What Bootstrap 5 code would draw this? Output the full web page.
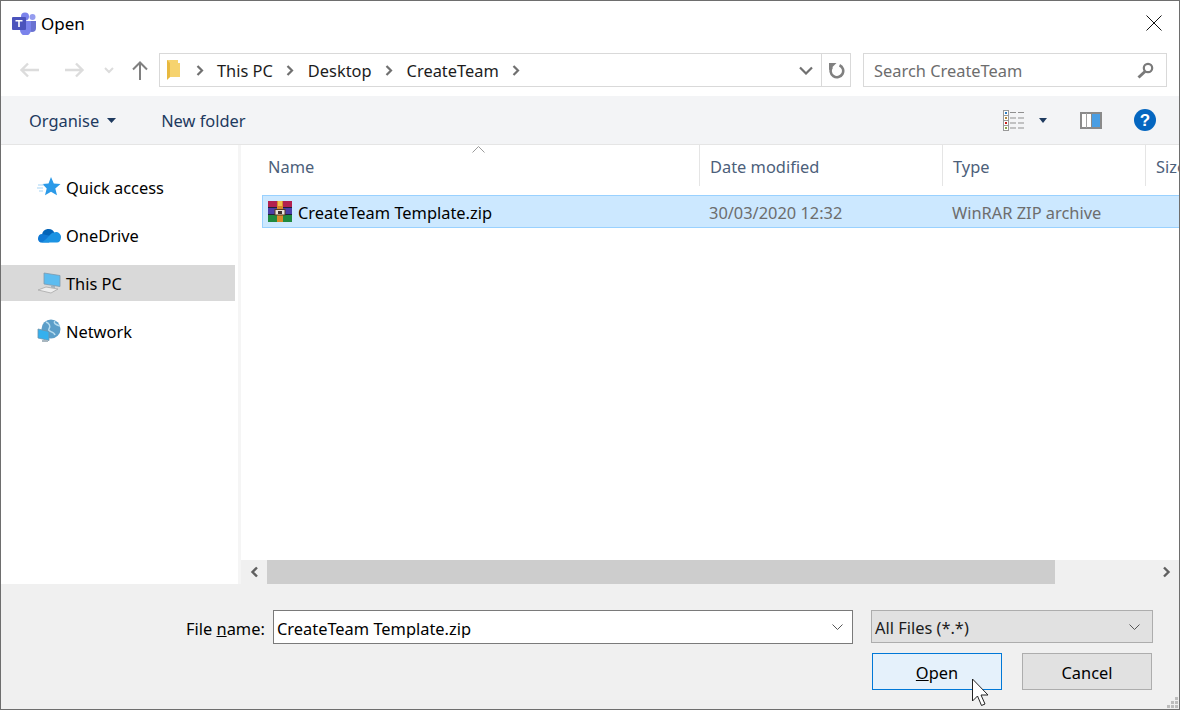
<!DOCTYPE html>
<html lang="en">
<head>
<meta charset="UTF-8">
<title>Open</title>
<link rel="stylesheet" href="https://cdn.jsdelivr.net/npm/bootstrap@5.3.3/dist/css/bootstrap.min.css">
<style>
    html, body { height: 100%; margin: 0; }
    body { font-family: "Noto Sans", "Open Sans", sans-serif; font-size: 16.4px; color: #000; background: #fff; overflow: hidden; line-height: 1.2; }
    svg { display: block; flex: none; }
    .dlg { width: 1180px; height: 710px; border: 1px solid #6e6e6e; position: relative; overflow: hidden; }
    .title-row { height: 47px; padding-left: 11px; }
    .title-row svg { margin-bottom: 3px; }
    .title-row span { margin-left: 5px; margin-bottom: 1px; font-size: 17px; }
    .title-row .close-x { margin-left: auto; margin-right: 17px; margin-bottom: 4px; }
    .nav-row { height: 48px; padding-bottom: 4px; }
    .nav-arrows { width: 158px; padding-left: 18px; }
    .gap-fwd { margin-left: 26px; }
    .gap-down { margin-left: 19px; }
    .gap-up { margin-left: 18px; }
    .addr { width: 692px; height: 34px; border: 1px solid #d9d9d9; color: #1c1c1c; }
    .addr-path { padding-left: 6px; }
    .addr-path .crumb { margin: 0 13px; padding-top: 2px; }
    .addr-path .crumb-wide { margin-left: 14px; }
    .addr-folder { margin-right: 15px; }
    .refresh { width: 29px; height: 100%; border-left: 1px solid #d9d9d9; }
    .search { width: 304px; height: 34px; margin-left: 12px; border: 1px solid #d9d9d9; color: #6d6d6d; padding: 2px 12px 0 10px; }
    .search svg { margin-top: -2px; }
    .tool-row { height: 49px; background: #f3f4f6; border-bottom: 1px solid #e5e5e5; color: #1e3a5f; padding-left: 28px; padding-right: 23px; }
    .tool-row span { padding-top: 1px; }
    .tool-caret { margin-left: 8px; }
    .new-folder { margin-left: 45px; }
    .gap-caret { margin-left: 14px; }
    .gap-pane { margin-left: 33px; }
    .gap-help { margin-left: 32px; }
    .main { height: 439px; }
    .side { flex: none; width: 240px; border-right: 3px solid #f5f5f5; padding-top: 24px; }
    .side-item { height: 36px; margin-bottom: 12px; padding-left: 36px; width: 234px; }
    .side-item svg { margin-right: 5px; }
    .side-item span { padding-top: 2px; }
    .side-item.is-on { background: #d9d9d9; }
    .files { min-width: 0; }
    .file-body { position: relative; overflow: hidden; }
    .col-head { height: 41px; color: #4c607a; }
    .col-head > div { flex: none; height: 100%; padding-left: 10px; padding-top: 3px; border-right: 1px solid #e5e5e5; display: flex; align-items: center; }
    .c-name { width: 459px; padding-left: 27px !important; position: relative; }
    .c-date { width: 243px; }
    .c-type { width: 203px; }
    .sort-up { position: absolute; left: 231px; top: 1px; }
    .file-row { height: 33px; margin-top: 9px; margin-left: 21px; background: #cce8ff; border: 1px solid #99d1ff; border-right: 0; }
    .file-row span, .f-date, .f-type { padding-top: 3px; }
    .f-name { flex: none; width: 446px; padding-left: 5px; }
    .f-name svg { margin-right: 6px; }
    .f-date { flex: none; width: 243px; color: #6d6d6d; }
    .f-type { color: #6d6d6d; }
    .h-scroll { height: 24px; background: #f0f0f0; margin-top: auto; }
    .h-btn { flex: none; width: 26px; }
    .h-thumb { flex: none; width: 788px; background: #cdcdcd; }
    .h-track { flex-grow: 1; }
    .foot { height: 125px; background: #f0f0f0; padding-top: 26px; }
    .name-line { padding-left: 185px; }
    .name-lbl { width: 87px; padding-top: 9px; }
    .name-box { width: 580px; height: 34px; background: #fff; border: 1px solid #7a7a7a; padding: 0 9px 0 3px; }
    .name-box input { border: 0; outline: 0; padding: 3px 0 0; background: transparent; font: inherit; color: #000; width: 100%; }
    .type-box { width: 282px; height: 33px; margin-left: 18px; background: #e1e1e1; border: 1px solid #adadad; padding: 0 12px 0 3px; color: #1c1c1c; }
    .type-box span { padding-top: 3px; }
    .btn-line { margin-top: 9px; padding-left: 871px; }
    .win-btn { width: 130px; height: 37px; border-radius: 0; background: #e1e1e1; border: 1px solid #adadad; color: #000; padding: 3px 0 0; font-size: 16.4px; line-height: 1.2; }
    .win-btn.is-default { background: #e5f1fb; border-color: #0078d7; margin-right: 20px; }
    .mouse { position: absolute; left: 970px; top: 677px; }
    .grip { position: absolute; right: 1px; bottom: 1px; }
</style>
</head>
<body>
<div class="dlg d-flex flex-column">

    <div class="title-row d-flex align-items-center">
        <svg width="24" height="23" viewBox="0 0 24 23"><circle cx="20.5" cy="5" r="3" fill="#7b83eb" opacity=".8"/><path d="M16 9h8v7a4 4 0 0 1-8 0z" fill="#5059c9" opacity=".85"/><circle cx="13" cy="4.5" r="4" fill="#7b83eb"/><path d="M8 9h11v9a5.500 5.500 0 0 1-11 0z" fill="#7b83eb"/><rect x="0" y="5" width="14" height="13" rx="1" fill="#4b53bc"/><path d="M3.500 8h7v1.500H7.800V15H6.200V9.500H3.500z" fill="#fff"/></svg>
        <span>Open</span>
        <svg class="close-x" width="16" height="16" viewBox="0 0 16 16"><path d="M.5.500l15 15M15.500.500l-15 15" stroke="#111" stroke-width="1"/></svg>
    </div>

    <div class="nav-row d-flex align-items-center">
        <div class="nav-arrows d-flex align-items-center">
            <svg width="20" height="16" viewBox="0 0 20 16"><path d="M9 1.500L2.500 8 9 14.500M2.500 8H20" fill="none" stroke="#dcdcdc" stroke-width="2.400"/></svg>
            <svg class="gap-fwd" width="20" height="16" viewBox="0 0 20 16"><path d="M11 1.500L17.500 8 11 14.500M17.500 8H0" fill="none" stroke="#dcdcdc" stroke-width="2.400"/></svg>
            <svg class="gap-down" width="10" height="7" viewBox="0 0 10 7"><path d="M1 1l4 4 4-4" fill="none" stroke="#dcdcdc" stroke-width="2"/></svg>
            <svg class="gap-up" width="16" height="19" viewBox="0 0 16 19"><path d="M1 8.500L8 1.500l7 7M8 1.500V19" fill="none" stroke="#808080" stroke-width="2"/></svg>
        </div>
        <div class="addr d-flex align-items-center">
            <div class="addr-path d-flex align-items-center flex-grow-1">
                <svg class="addr-folder" width="15" height="21" viewBox="0 0 15 21"><path d="M1 0h11v3h2v14H4l-3 2z" fill="#f6d36f"/><path d="M1 0l3 3v14l-3 3z" fill="#e8b93f"/></svg>
                <svg width="8" height="11" viewBox="0 0 8 11"><path d="M1.500 1l4.500 4.500L1.500 10" fill="none" stroke="#707070" stroke-width="2.200"/></svg>
                <span class="crumb">This PC</span>
                <svg width="8" height="11" viewBox="0 0 8 11"><path d="M1.500 1l4.500 4.500L1.500 10" fill="none" stroke="#707070" stroke-width="2.200"/></svg>
                <span class="crumb crumb-wide">Desktop</span>
                <svg width="8" height="11" viewBox="0 0 8 11"><path d="M1.500 1l4.500 4.500L1.500 10" fill="none" stroke="#707070" stroke-width="2.200"/></svg>
                <span class="crumb crumb-wide">CreateTeam</span>
                <svg width="8" height="11" viewBox="0 0 8 11"><path d="M1.500 1l4.500 4.500L1.500 10" fill="none" stroke="#707070" stroke-width="2.200"/></svg>
            </div>
            <svg class="me-2" width="14" height="9" viewBox="0 0 14 9"><path d="M1 1.500l6 6 6-6" fill="none" stroke="#707070" stroke-width="2.200"/></svg>
            <div class="refresh d-flex align-items-center justify-content-center">
                <svg width="17" height="17" viewBox="0 0 17 17"><path d="M4 5A6.300 6.300 0 1 0 11.500 3.200" fill="none" stroke="#808080" stroke-width="2.600"/><path d="M1 1h7.500L1 8.500z" fill="#808080"/></svg>
            </div>
        </div>
        <div class="search d-flex align-items-center justify-content-between">
            <span>Search CreateTeam</span>
            <svg width="17" height="17" viewBox="0 0 17 17"><circle cx="11" cy="6" r="4.200" fill="none" stroke="#7a7a7a" stroke-width="2.200"/><path d="M8 9.500L1.500 15.500" stroke="#7a7a7a" stroke-width="3"/></svg>
        </div>
    </div>

    <div class="tool-row d-flex align-items-center">
        <span>Organise</span>
        <svg class="tool-caret" width="9" height="5" viewBox="0 0 9 5"><path d="M0 0h9L4.500 5z" fill="#1e3a5f"/></svg>
        <span class="new-folder">New folder</span>
        <svg class="ms-auto" width="22" height="21" viewBox="0 0 22 21"><rect x=".5" y=".5" width="5" height="5" fill="#fff" stroke="#999"/><rect x=".5" y="5.500" width="5" height="5" fill="#fff" stroke="#999"/><rect x=".5" y="10.500" width="5" height="5" fill="#fff" stroke="#999"/><rect x=".5" y="15.500" width="5" height="5" fill="#fff" stroke="#999"/><rect x="2" y="2" width="2" height="2" fill="#2f7fc4"/><rect x="2" y="7" width="2" height="2" fill="#b58a3c"/><rect x="2" y="12" width="2" height="2" fill="#c8201c"/><rect x="2" y="17" width="2" height="2" fill="#8aa84a"/><path d="M7 2.500h6M15 2.500h6M7 8h6M15 8h6M7 13h6M15 13h6M7 18h6M15 18h6" stroke="#8f8f8f" stroke-width="1"/></svg>
        <svg class="gap-caret" width="8" height="5" viewBox="0 0 8 5"><path d="M0 0h8L4 5z" fill="#1e3a5f"/></svg>
        <svg class="gap-pane" width="22" height="17" viewBox="0 0 22 17"><rect x="1" y="1" width="20" height="15" fill="#fff" stroke="#8a8a8a" stroke-width="2"/><rect x="6" y="1" width="1" height="15" fill="#a0a0a0"/><rect x="12" y="2" width="8" height="13" fill="#4a9ee3"/><rect x="11" y="2" width="1" height="13" fill="#8a8a8a"/></svg>
        <svg class="gap-help" width="22" height="22" viewBox="0 0 22 22"><circle cx="11" cy="11" r="11" fill="#0466c0"/><text x="11" y="17" text-anchor="middle" font-family="Liberation Sans, sans-serif" font-size="17" font-weight="700" fill="#fff">?</text></svg>
    </div>

    <div class="main d-flex">
        <div class="side">
            <div class="side-item d-flex align-items-center">
                <svg width="24" height="22" viewBox="0 0 24 22"><path d="M14 1l2.800 6.500 6.700.5-5.200 4.500 1.700 6.800-6-3.600-6 3.600 1.700-6.800L5.500 8l6-.5z" fill="#2b9ae8"/><path d="M1 9h6M0 12h6M2 15h4" stroke="#a5d4f5" stroke-width="1"/></svg>
                <span>Quick access</span>
            </div>
            <div class="side-item d-flex align-items-center">
                <svg width="24" height="16" viewBox="0 0 24 16"><path d="M5 8a6.500 6.500 0 0 1 12.500-2A5 5 0 0 1 22 8l-8 4z" fill="#0364b8"/><path d="M5 7a4.500 4.500 0 0 0-1.500 8.500H12l4-6z" fill="#0f78d4"/><path d="M17 5.500a5 5 0 0 1 7 5c0 3-2 5-4 5H4c6-2 9-10 13-10z" fill="#1c93e3"/></svg>
                <span>OneDrive</span>
            </div>
            <div class="side-item d-flex align-items-center is-on">
                <svg width="24" height="22" viewBox="0 0 24 22"><path d="M7 1l16 2.500v11L7 12z" fill="#5cbcf0" stroke="#7d99ad" stroke-width=".8"/><path d="M14 13.500l4 .5v2l-4-.5z" fill="#9fb2bf"/><path d="M1 18l8-3 12 2-7 4z" fill="#eee" stroke="#a8a8a8" stroke-width=".8"/></svg>
                <span>This PC</span>
            </div>
            <div class="side-item d-flex align-items-center">
                <svg width="24" height="24" viewBox="0 0 24 24"><circle cx="14" cy="10" r="9.500" fill="#5b9ec9"/><path d="M9 3c3 1 5 4 3 7s5 2 6 6M18 2c-2 2 1 4 5 5" fill="none" stroke="#b7dcef" stroke-width="1.500"/><path d="M1 10l11 2.500v9L1 19z" fill="#35b0ee" stroke="#6f93aa" stroke-width=".8"/><path d="M5 21h6v2H5z" fill="#a9b7c0"/></svg>
                <span>Network</span>
            </div>
        </div>

        <div class="files flex-grow-1 d-flex flex-column">
            <div class="file-body flex-grow-1">
                <div class="col-head d-flex">
                    <div class="c-name">Name
                        <svg class="sort-up" width="13" height="7" viewBox="0 0 13 7"><path d="M.5 6.500l6-6 6 6" fill="none" stroke="#9a9a9a"/></svg>
                    </div>
                    <div class="c-date">Date modified</div>
                    <div class="c-type">Type</div>
                    <div class="border-0">Size</div>
                </div>
                <div class="file-row d-flex align-items-center">
                    <div class="f-name d-flex align-items-center">
                        <svg width="24" height="21" viewBox="0 0 24 21"><rect width="24" height="7" fill="#b3204f"/><rect y="7" width="24" height="7" fill="#4a3fa8"/><rect y="14" width="24" height="7" fill="#1f8a3f"/><path d="M0 6.500h24M0 13.500h24" stroke="#20203a" stroke-width="1"/><rect x="9" width="6" height="21" fill="#d98a2b"/><rect x="10" y="0" width="4" height="5" fill="#f2c14e"/><rect x="7" y="8.500" width="10" height="5.500" fill="#e9e4dc" stroke="#5a3b20"/><rect x="10" y="10" width="4" height="3" fill="#40302a"/></svg>
                        <span>CreateTeam Template.zip</span>
                    </div>
                    <div class="f-date">30/03/2020 12:32</div>
                    <div class="f-type">WinRAR ZIP archive</div>
                </div>
            </div>
            <div class="h-scroll d-flex">
                <div class="h-btn d-flex align-items-center justify-content-center"><svg width="9" height="12" viewBox="0 0 9 12"><path d="M7 1.500L2.500 6 7 10.500" fill="none" stroke="#606060" stroke-width="2.400"/></svg></div>
                <div class="h-thumb"></div>
                <div class="h-track"></div>
                <div class="h-btn d-flex align-items-center justify-content-center"><svg width="9" height="12" viewBox="0 0 9 12"><path d="M2 1.500L6.500 6 2 10.500" fill="none" stroke="#606060" stroke-width="2.400"/></svg></div>
            </div>
        </div>
    </div>

    <div class="foot">
        <div class="name-line d-flex align-items-start">
            <label class="name-lbl">File <u>n</u>ame:</label>
            <div class="name-box d-flex align-items-center">
                <input type="text" value="CreateTeam Template.zip">
                <svg width="11" height="6" viewBox="0 0 11 6"><path d="M.5.500l5 5 5-5" fill="none" stroke="#555"/></svg>
            </div>
            <div class="type-box d-flex align-items-center justify-content-between">
                <span>All Files (*.*)</span>
                <svg width="11" height="6" viewBox="0 0 11 6"><path d="M.5.500l5 5 5-5" fill="none" stroke="#555"/></svg>
            </div>
        </div>
        <div class="btn-line d-flex">
            <button type="button" class="btn win-btn is-default"><u>O</u>pen</button>
            <button type="button" class="btn win-btn">Cancel</button>
        </div>
    </div>

    <svg class="mouse" width="20" height="29" viewBox="0 0 20 29"><path d="M1.500 1v22l5-5 4 9.500 3.500-1.500-4-9h7z" fill="#fff" stroke="#222" stroke-width="1"/></svg>
    <svg class="grip" width="11" height="11" viewBox="0 0 11 11"><path d="M8 0h3v3H8zM4 4h3v3H4zM8 4h3v3H8zM0 8h3v3H0zM4 8h3v3H4zM8 8h3v3H8z" fill="#bdbdbd"/></svg>
</div>
</body>
</html>
